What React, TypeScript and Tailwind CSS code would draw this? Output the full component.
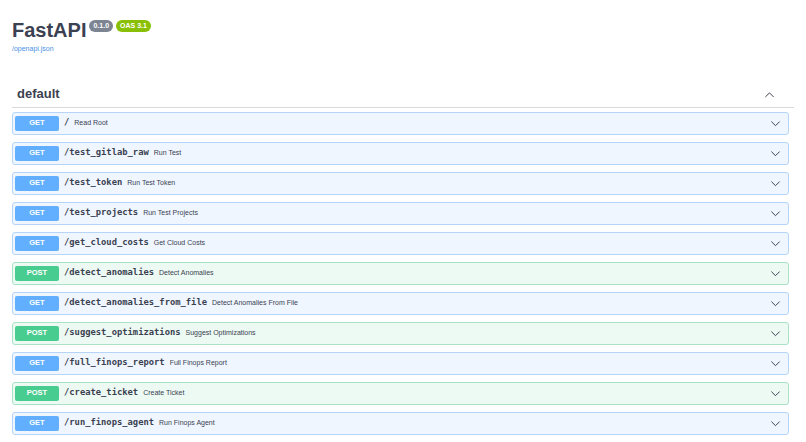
const endpoints = [
  { method: "GET", path: "/", summary: "Read Root" },
  { method: "GET", path: "/test_gitlab_raw", summary: "Run Test" },
  { method: "GET", path: "/test_token", summary: "Run Test Token" },
  { method: "GET", path: "/test_projects", summary: "Run Test Projects" },
  { method: "GET", path: "/get_cloud_costs", summary: "Get Cloud Costs" },
  { method: "POST", path: "/detect_anomalies", summary: "Detect Anomalies" },
  { method: "GET", path: "/detect_anomalies_from_file", summary: "Detect Anomalies From File" },
  { method: "POST", path: "/suggest_optimizations", summary: "Suggest Optimizations" },
  { method: "GET", path: "/full_finops_report", summary: "Full Finops Report" },
  { method: "POST", path: "/create_ticket", summary: "Create Ticket" },
  { method: "GET", path: "/run_finops_agent", summary: "Run Finops Agent" },
]

const Chevron = ({ up = false }: { up?: boolean }) => (
  <svg width="11" height="11" viewBox="0 0 20 20" className="text-[#3b4151]">
    <path
      d={up ? "M3 14l7-7 7 7" : "M3 7l7 7 7-7"}
      fill="none"
      stroke="currentColor"
      strokeWidth="1.8"
      strokeLinecap="round"
      strokeLinejoin="round"
    />
  </svg>
)

const App = () => {
  return (
    <div className="w-[806px] h-[442px] bg-white overflow-hidden font-['Liberation_Sans',Arial,sans-serif] text-[#3b4151]">
      {/* info */}
      <div className="px-3 pt-[17px]">
        <div className="flex items-start">
          <h2 className="text-[20px] font-bold leading-[26px]">FastAPI</h2>
          <div className="flex gap-[3px] ml-[3px] mt-[3px]">
            <span className="bg-[#7d8492] text-white text-[7px] font-bold rounded-full px-[4px] h-[12px] leading-[12px]">0.1.0</span>
            <span className="bg-[#89bf04] text-white text-[7px] font-bold rounded-full px-[4px] h-[12px] leading-[12px]">OAS 3.1</span>
          </div>
        </div>
        <a href="#" className="block text-[7px] text-[#4990e2] mt-[1px]">/openapi.json</a>
      </div>

      {/* tag section */}
      <div className="pl-3 pr-[12px] mt-[27px]">
        <div className="flex items-center justify-between pl-[5px] pr-[19px] h-[26px] border-b border-[#3b4151]/20">
          <h3 className="text-[13px] font-bold">default</h3>
          <Chevron up />
        </div>

        <div className="flex flex-col gap-[7px] mt-[4px] mr-[5px]">
          {endpoints.map((e) => {
            const post = e.method === "POST"
            return (
              <div
                key={e.path}
                className={`flex items-center h-[23px] pl-[2px] pr-[7px] border rounded-[3px] ${
                  post ? "bg-[#edfaf3] border-[#a8e3c6]" : "bg-[#eff6ff] border-[#b4d5f7]"
                }`}
              >
                <span
                  className={`w-[44px] h-[15px] rounded-[2px] text-white text-[7.5px] font-bold flex items-center justify-center ${
                    post ? "bg-[#49cc90]" : "bg-[#61affe]"
                  }`}
                >
                  {e.method}
                </span>
                <span className="ml-[5px] font-['DejaVu_Sans_Mono',monospace] font-bold text-[8.8px]">{e.path}</span>
                <span className="ml-[5px] text-[7px]">{e.summary}</span>
                <span className="ml-auto">
                  <Chevron />
                </span>
              </div>
            )
          })}
        </div>
      </div>
    </div>
  )
}

export default App
